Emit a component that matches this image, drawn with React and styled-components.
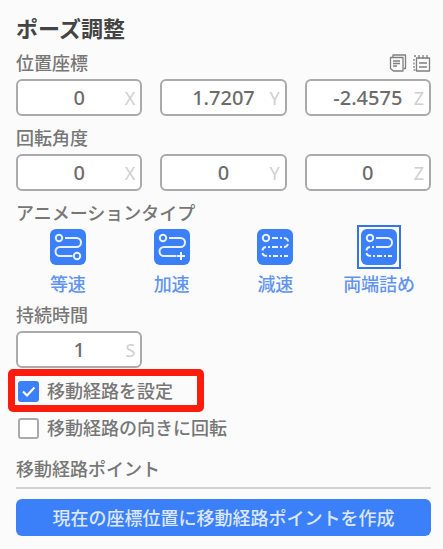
import React, { useState } from 'react'
import styled, { createGlobalStyle } from 'styled-components'

const ANIMATION_TYPES = [
  { id: 'constant', label: '等速' },
  { id: 'accelerate', label: '加速' },
  { id: 'decelerate', label: '減速' },
  { id: 'both', label: '両端詰め' },
]

function VectorField({ name, initial }) {
  const [values, setValues] = useState(initial)
  return (
    <FieldRow>
      {['X', 'Y', 'Z'].map((axis, i) => (
        <Field key={axis}>
          <FieldInput
            aria-label={`${name} ${axis}`}
            value={values[i]}
            onChange={(e) => setValues(values.map((v, n) => (n === i ? e.target.value : v)))}
          />
          <Unit>{axis}</Unit>
        </Field>
      ))}
    </FieldRow>
  )
}

function PathIcon({ type }) {
  return (
    <PathSvg viewBox="0 0 36 36" aria-hidden="true">
      <circle cx="9" cy="9" r="3.2" />
      {type === 'decelerate' ? (
        <path d="M15 9h6M23 9h2M27 9q4 .5 4 3.5M31 15q-1 3-4 3M25 18h-2M21 18h-6" />
      ) : (
        <path d="M15 9H26.5a4.5 4.5 0 0 1 0 9H15" />
      )}
      {(type === 'constant' || type === 'accelerate') && (
        <path d="M15 18H10a4.5 4.5 0 0 0 0 9H22.5" />
      )}
      {(type === 'decelerate' || type === 'both') && (
        <path d="M13 18h-2M9 18q-3.500 .5-3.500 3.500M5.500 24q.5 3 4.500 3M12 27h2M16 27h5M23 27h2M27 27h4" />
      )}
      {type === 'constant' && <circle cx="27" cy="27" r="3.2" />}
      {type === 'accelerate' && <path d="M27 23v8M23 27h8" />}
    </PathSvg>
  )
}

function CheckRow({ label, checked, onChange, marked }) {
  return (
    <CheckLabel $marked={marked}>
      <CheckBox>
        <CheckInput type="checkbox" checked={checked} onChange={(e) => onChange(e.target.checked)} />
        {checked && (
          <CheckMark viewBox="0 0 21 21" aria-hidden="true">
            <path d="M5 10.5l4 4 7.5-8" />
          </CheckMark>
        )}
      </CheckBox>
      {label}
    </CheckLabel>
  )
}

function App() {
  const [type, setType] = useState('both')
  const [duration, setDuration] = useState('1')
  const [usePath, setUsePath] = useState(true)
  const [followPath, setFollowPath] = useState(false)

  return (
    <Panel>
      <GlobalStyle />
      <Title>ポーズ調整</Title>

      <SectionHeader>
        <SectionLabel>位置座標</SectionLabel>
        <Tools>
          <ToolButton aria-label="コピー">
            <ToolSvg viewBox="0 0 18 18">
              <path d="M4 3V1h12.500v13.500h-2" />
              <path d="M1.500 3.500h12.500v13.500h-9.500l-3-2.500z" />
              <path d="M4 7h7M4 9.500h7M4 12h4" strokeWidth="1.500" />
            </ToolSvg>
          </ToolButton>
          <ToolButton aria-label="貼り付け">
            <ToolSvg viewBox="0 0 18 18">
              <path d="M3.500 4h13v13h-13z" />
              <path d="M6 9h8M6 13h8M6 1v4M10 1v4M14 1v4" />
              <path d="M1 2h3M1 5v11h2" strokeDasharray="2 1.500" />
            </ToolSvg>
          </ToolButton>
        </Tools>
      </SectionHeader>
      <VectorField name="位置座標" initial={['0', '1.7207', '-2.4575']} />

      <SectionHeader>
        <SectionLabel>回転角度</SectionLabel>
      </SectionHeader>
      <VectorField name="回転角度" initial={['0', '0', '0']} />

      <TypeGroup>
        <TypeLegend>アニメーションタイプ</TypeLegend>
        <TypeGrid>
          {ANIMATION_TYPES.map((item) => (
            <TypeOption key={item.id}>
              <TypeInput
                type="radio"
                name="animationType"
                checked={type === item.id}
                onChange={() => setType(item.id)}
              />
              <TypeFrame $selected={type === item.id}>
                <PathIcon type={item.id} />
              </TypeFrame>
              {item.label}
            </TypeOption>
          ))}
        </TypeGrid>
      </TypeGroup>

      <SectionHeader>
        <SectionLabel as="label" htmlFor="duration">持続時間</SectionLabel>
      </SectionHeader>
      <FieldRow>
        <Field>
          <FieldInput id="duration" value={duration} onChange={(e) => setDuration(e.target.value)} />
          <Unit>S</Unit>
        </Field>
      </FieldRow>

      <Checks>
        <CheckRow label="移動経路を設定" checked={usePath} onChange={setUsePath} marked />
        <CheckRow label="移動経路の向きに回転" checked={followPath} onChange={setFollowPath} />
      </Checks>

      <PointsHeader>移動経路ポイント</PointsHeader>
      <CreateButton>現在の座標位置に移動経路ポイントを作成</CreateButton>
    </Panel>
  )
}

export default App

const GlobalStyle = createGlobalStyle`
* {
  box-sizing: border-box;
}
body {
  margin: 0;
  background: #fbfbfb;
  color: #777;
  font-family: "Noto Sans", "Noto Sans CJK JP", sans-serif;
  font-size: 18px;
  font-weight: 500;
  line-height: 24px;
}
button, input {
  font: inherit;
}
`

const Panel = styled.main`
  padding: 12px 12px 12px 16px;
`
const Title = styled.h1`
  margin: 0 0 7px;
  color: #444;
  font-size: 22px;
  font-weight: 700;
  line-height: 32px;
`
const SectionHeader = styled.div`
  display: flex;
  align-items: center;
  justify-content: space-between;
  margin-bottom: 4px;
`
const SectionLabel = styled.span`
  display: block;
`
const Tools = styled.div`
  display: flex;
  gap: 6px;
`
const ToolButton = styled.button`
  display: flex;
  padding: 0;
  border: 0;
  background: none;
  cursor: pointer;
`
const ToolSvg = styled.svg`
  width: 18px;
  height: 18px;
  fill: none;
  stroke: #808080;
  stroke-width: 1.3;
  stroke-linejoin: round;
`
const FieldRow = styled.div`
  display: grid;
  grid-template-columns: repeat(3, 1fr);
  gap: 18px;
  margin-bottom: 10px;
`
const Field = styled.div`
  position: relative;
`
const FieldInput = styled.input`
  display: block;
  width: 100%;
  height: 37px;
  padding: 0 20px;
  border: 2px solid #aaa;
  border-radius: 6px;
  background: #fff;
  color: #6c6c6c;
  font-size: 20px;
  text-align: center;
`
const Unit = styled.span`
  position: absolute;
  top: 7px;
  right: 7px;
  color: #cfcfcf;
  font-weight: 400;
  pointer-events: none;
`
const TypeGroup = styled.fieldset`
  margin: 0 0 7px;
  padding: 0;
  border: 0;
`
const TypeLegend = styled.legend`
  padding: 0;
`
const TypeGrid = styled.div`
  display: grid;
  grid-template-columns: repeat(4, 1fr);
`
const TypeOption = styled.label`
  position: relative;
  display: flex;
  flex-direction: column;
  align-items: center;
  gap: 3px;
  color: #6294ef;
  cursor: pointer;
`
const TypeInput = styled.input`
  position: absolute;
  margin: 0;
  opacity: 0;
`
const TypeFrame = styled.span`
  padding: 2px;
  border: 2px solid ${(p) => (p.$selected ? '#3574e8' : 'transparent')};
`
const PathSvg = styled.svg`
  display: block;
  width: 36px;
  height: 36px;
  border-radius: 6px;
  background: #3b7ff9;
  fill: none;
  stroke: #eaf1ff;
  stroke-width: 2;
`
const Checks = styled.div`
  display: flex;
  flex-direction: column;
  align-items: flex-start;
  gap: 13px;
  margin: 11px 0 17px;
`
const CheckLabel = styled.label`
  position: relative;
  display: flex;
  align-items: center;
  gap: 8px;
  padding-left: 2px;
  cursor: pointer;

  &::after {
    content: "";
    display: ${(p) => (p.$marked ? 'block' : 'none')};
    position: absolute;
    inset: -10px -31px -9px -8px;
    border: 7px solid #fd1c0c;
    border-radius: 5px;
    pointer-events: none;
  }
`
const CheckBox = styled.span`
  display: grid;
  > * {
    grid-area: 1 / 1;
  }
`
const CheckInput = styled.input`
  appearance: none;
  width: 21px;
  height: 21px;
  margin: 0;
  border: 2px solid #aaa;
  border-radius: 3px;
  background: #fff;

  &:checked {
    border-color: #3b7ff9;
    background: #3b7ff9;
  }
`
const CheckMark = styled.svg`
  width: 21px;
  height: 21px;
  fill: none;
  stroke: #fff;
  stroke-width: 2.2;
  pointer-events: none;
`
const PointsHeader = styled.h2`
  margin: 0 0 10px;
  padding-bottom: 6px;
  border-bottom: 2px solid #d2d2d2;
  font-size: 18px;
  font-weight: 500;
`
const CreateButton = styled.button`
  display: block;
  width: 100%;
  height: 37px;
  padding: 0;
  border: 0;
  border-radius: 6px;
  background: #3b7ff9;
  color: #dbe8ff;
  cursor: pointer;
`
